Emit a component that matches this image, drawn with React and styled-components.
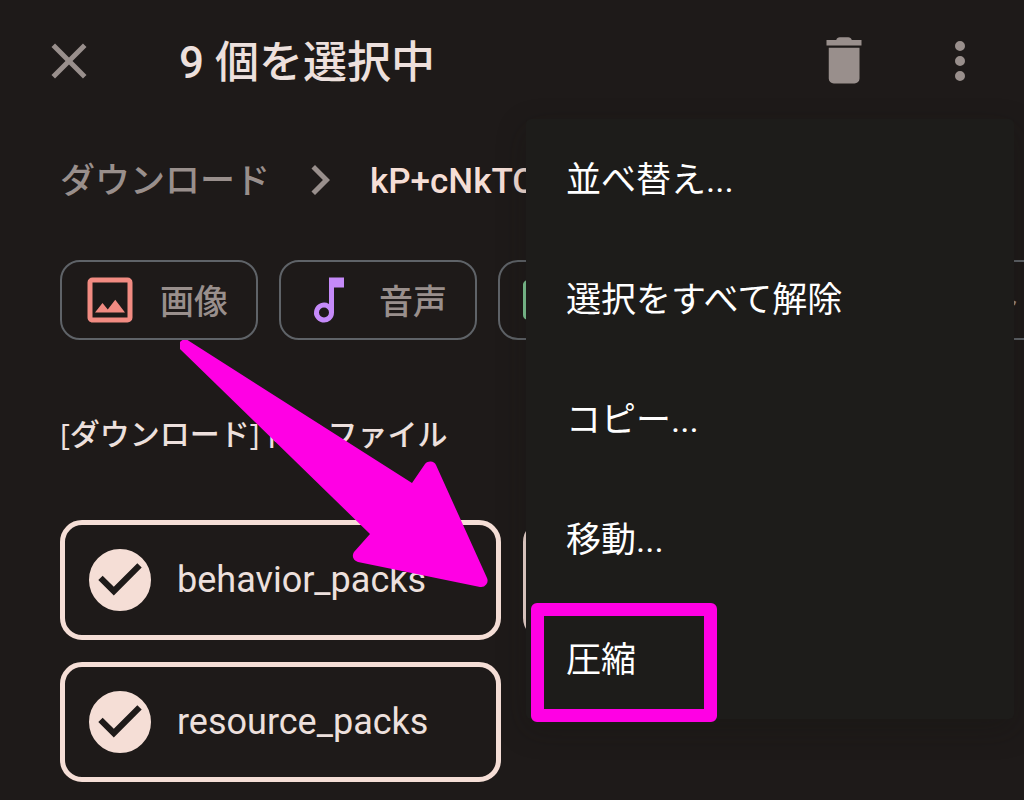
import { useState } from 'react';
import styled, { createGlobalStyle } from 'styled-components';

const GlobalStyle = createGlobalStyle`
  * {
    box-sizing: border-box;
  }
  body {
    margin: 0;
    min-height: 100vh;
    background-color: #1e1a19;
    overflow: hidden;
  }
  body, button, input {
    font-family: Roboto, 'Noto Sans CJK JP', sans-serif;
  }
`;

const Container = styled.div`
  position: relative;
  display: flex;
  flex-direction: column;
  min-height: 100vh;
  overflow: hidden;
  color: #ede0dd;
`;

const Header = styled.header`
  display: flex;
  align-items: center;
  height: 122px;
  padding: 0 34px 0 39px;
`;

const IconButton = styled.button`
  display: flex;
  padding: 0;
  border: none;
  background: none;
  color: #998f8c;
  cursor: pointer;
`;

const Actions = styled.div`
  display: flex;
  gap: 56px;
  margin-left: auto;
`;

const Title = styled.h1`
  margin: 0 0 0 80px;
  padding-top: 4px;
  font-size: 44px;
  font-weight: 500;
  line-height: 60px;
`;

const Breadcrumb = styled.nav`
  display: flex;
  align-items: center;
  gap: 20px;
  height: 116px;
  padding-left: 60px;
  font-size: 35px;
  font-weight: 500;
  line-height: 44px;
  white-space: nowrap;
`;

const Crumb = styled.a`
  padding-top: 4px;
  color: ${({ $current }) => ($current ? '#f5ded6' : '#998f8c')};
  text-decoration: none;
`;

const CrumbIcon = styled.svg`
  flex: none;
  color: #998f8c;
`;

const Chips = styled.div`
  display: flex;
  gap: 21px;
  padding: 22px 0 0 60px;
`;

const Chip = styled.button`
  display: flex;
  flex: none;
  align-items: center;
  gap: 20px;
  height: 80px;
  padding: 0 28px 0 18px;
  border: 2px solid #5f6368;
  border-radius: 20px;
  background: none;
  color: #998f8c;
  font-size: 34px;
  font-weight: 500;
  line-height: 44px;
  cursor: pointer;
`;

const ChipLabel = styled.span`
  padding-top: 4px;
`;

const SectionTitle = styled.h2`
  margin: 72px 0 0;
  padding-left: 60px;
  font-family: 'Open Sans', 'Noto Sans CJK JP', sans-serif;
  font-size: 30px;
  font-weight: 500;
  line-height: 44px;
`;

const FileGrid = styled.div`
  display: grid;
  grid-template-columns: 1fr 1fr;
  gap: 22px;
  padding: 64px 60px 0;
`;

const FileCard = styled.label`
  display: flex;
  align-items: center;
  gap: 26px;
  height: 120px;
  padding: 0 24px;
  border: 5px solid ${({ $checked }) => ($checked ? '#f5ded6' : '#5f6368')};
  border-radius: 22px;
  font-size: 36px;
  cursor: pointer;
`;

const CheckWrapper = styled.span`
  display: grid;
  place-items: center;

  > * {
    grid-area: 1 / 1;
  }
`;

const CheckInput = styled.input`
  width: 62px;
  height: 62px;
  margin: 0;
  appearance: none;
  border: 3px solid #f5ded6;
  border-radius: 50%;
  cursor: pointer;

  &:checked {
    background-color: #f5ded6;
  }
`;

const CheckMark = styled.svg`
  pointer-events: none;
`;

const Menu = styled.div`
  position: absolute;
  top: 119px;
  right: 10px;
  display: flex;
  flex-direction: column;
  width: 488px;
  border-radius: 5px;
  background-color: #1d1c1a;
  box-shadow: 0 10px 30px 0 rgba(20, 20, 18, 0.3);
`;

const MenuItem = styled.button`
  position: relative;
  height: 120px;
  padding: 4px 40px 0;
  border: none;
  background: none;
  color: #fff;
  font-size: 35px;
  line-height: 44px;
  text-align: left;
  cursor: pointer;
`;

const Highlight = styled.span`
  position: absolute;
  top: 4px;
  left: 5px;
  width: 186px;
  height: 119px;
  border: 13px solid #ff00e4;
  border-radius: 6px;
  pointer-events: none;
`;

const Arrow = styled.svg`
  position: absolute;
  top: 340px;
  left: 180px;
  pointer-events: none;
`;

const CHIPS = [
  {
    label: '画像',
    color: '#f28b82',
    path: 'M19 5v14H5V5h14m0-2H5a2 2 0 0 0-2 2v14c0 1.1.9 2 2 2h14a2 2 0 0 0 2-2V5a2 2 0 0 0-2-2zM14.1 11.9l-3 3.9L9 13.2 6 17h12l-3.9-5.1z',
  },
  {
    label: '音声',
    color: '#c58af9',
    path: 'M12 3v10.55A4 4 0 1 0 14 17V7h4V3h-6zm-2 16a2 2 0 1 1 0-4 2 2 0 0 1 0 4z',
  },
  {
    label: '動画',
    color: '#81c995',
    path: 'M4 4h16a2 2 0 0 1 2 2v12a2 2 0 0 1-2 2H4a2 2 0 0 1-2-2V6c0-1.1.9-2 2-2zm0 6v8h16v-8H4z',
  },
  {
    label: 'ドキュメント',
    color: '#8ab4f8',
    path: 'M14 2H6a2 2 0 0 0-2 2v16c0 1.1.9 2 2 2h12a2 2 0 0 0 2-2V8l-6-6zM6 20V4h7v5h5v11H6z',
  },
];

const FILES = ['behavior_packs', 'db', 'resource_packs'];

const MENU_ITEMS = ['並べ替え...', '選択をすべて解除', 'コピー...', '移動...', '圧縮'];

function Icon({ path, color = 'currentColor' }) {
  return (
    <svg width='60' height='60' viewBox='0 0 24 24' fill={color} aria-hidden='true'>
      <path d={path} />
    </svg>
  );
}

function FileItem({ name }) {
  const [checked, setChecked] = useState(true);

  return (
    <FileCard $checked={checked}>
      <CheckWrapper>
        <CheckInput
          type='checkbox'
          checked={checked}
          onChange={(event) => setChecked(event.target.checked)}
        />
        {checked && (
          <CheckMark width='62' height='62' viewBox='2 2 20 20' fill='#1e1a19'>
            <path d='M10 17l-5-5 1.41-1.41L10 14.17l7.59-7.59L19 8l-9 9z' />
          </CheckMark>
        )}
      </CheckWrapper>
      {name}
    </FileCard>
  );
}

function App() {
  return (
    <Container>
      <GlobalStyle />
      <Header>
        <IconButton aria-label='閉じる'>
          <Icon path='M19 6.41 17.59 5 12 10.59 6.41 5 5 6.41 10.59 12 5 17.59 6.41 19 12 13.41 17.59 19 19 17.59 13.41 12 19 6.41z' />
        </IconButton>
        <Title>9 個を選択中</Title>
        <Actions>
          <IconButton aria-label='削除'>
            <Icon path='M5.9 6.7h12.3V19a2 2 0 0 1-2 2H7.9a2 2 0 0 1-2-2V6.7zM5 3.6h3.9c.2-.7.7-1.1 1.4-1.1h3.4c.7 0 1.2.4 1.4 1.1H19v2.2H5V3.6z' />
          </IconButton>
          <IconButton aria-label='その他'>
            <Icon path='M12 8a2 2 0 1 0 0-4 2 2 0 0 0 0 4zm0 2a2 2 0 1 0 0 4 2 2 0 0 0 0-4zm0 6a2 2 0 1 0 0 4 2 2 0 0 0 0-4z' />
          </IconButton>
        </Actions>
      </Header>
      <Breadcrumb>
        <Crumb href='#download'>ダウンロード</Crumb>
        <CrumbIcon width='60' height='60' viewBox='0 0 24 24' fill='currentColor'>
          <path d='M10 6 8.59 7.41 13.17 12l-4.58 4.59L10 18l6-6z' />
        </CrumbIcon>
        <Crumb href='#current' $current>
          kP+cNkTC
        </Crumb>
      </Breadcrumb>
      <Chips>
        {CHIPS.map((chip) => (
          <Chip key={chip.label}>
            <Icon path={chip.path} color={chip.color} />
            <ChipLabel>{chip.label}</ChipLabel>
          </Chip>
        ))}
      </Chips>
      <SectionTitle>[ダウンロード] 内のファイル</SectionTitle>
      <FileGrid>
        {FILES.map((name) => (
          <FileItem key={name} name={name} />
        ))}
      </FileGrid>
      <Menu role='menu'>
        {MENU_ITEMS.map((item) => (
          <MenuItem key={item} role='menuitem'>
            {item}
            {item === '圧縮' && <Highlight />}
          </MenuItem>
        ))}
      </Menu>
      <Arrow width='310' height='250' viewBox='180 340 310 250' fill='#ff00e4'>
        <path d='M189 341 412 483 425 464A6.5 6.5 0 0 1 436 465L487 578A6.5 6.5 0 0 1 480 587L358 562A6.5 6.5 0 0 1 354 552L370 534 181 350A5.5 5.5 0 0 1 189 341z' />
      </Arrow>
    </Container>
  );
}

export default App;
